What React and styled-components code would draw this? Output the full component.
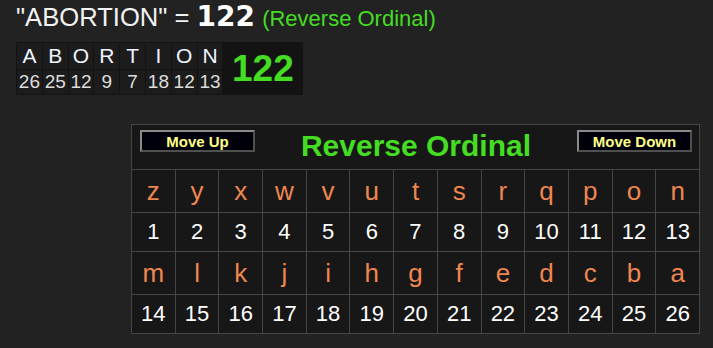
import React from "react";
import styled, { createGlobalStyle } from "styled-components";

const Global = createGlobalStyle`
  html, body { margin: 0; padding: 0; background: #222222; }
  body { font-family: "Liberation Sans", Arial, sans-serif; }
`;

const Page = styled.div`
  padding: 3px 0 0 16px;
`;

const Heading = styled.div`
  color: #f2f2f2;
  font-size: 25.6px;
  line-height: 1;
  white-space: nowrap;
`;

const Total = styled.span`
  font-family: "DejaVu Sans", Verdana, sans-serif;
  font-weight: bold;
  font-size: 28px;
  color: #ffffff;
`;

const CipherName = styled.span`
  font-size: 22px;
  color: #44dd22;
`;

const WordTable = styled.div`
  display: inline-grid;
  grid-template-columns: repeat(8, 24.8px) 79px;
  grid-template-rows: 26px 24px;
  gap: 1px;
  padding: 1px;
  background: #131313;
  margin-top: 11px;
`;

const WordCell = styled.div`
  background: #1c1c1c;
  display: flex;
  align-items: center;
  justify-content: center;
  color: ${(p) => (p.$letter ? "#eef4ff" : "#dddddd")};
  font-size: ${(p) => (p.$letter ? "21px" : "19px")};
`;

const WordTotal = styled.div`
  grid-column: 9;
  grid-row: 1 / span 2;
  background: #131313;
  display: flex;
  align-items: center;
  justify-content: center;
  color: #44dd22;
  font-weight: bold;
  font-size: 37px;
`;

const Chart = styled.div`
  display: grid;
  width: 569px;
  box-sizing: border-box;
  grid-template-columns: repeat(13, 1fr);
  grid-template-rows: 44px 42px 38px 42px 38px;
  gap: 1px;
  padding: 1px;
  background: #454545;
  margin: 29px 0 0 115px;
`;

const Header = styled.div`
  grid-column: 1 / -1;
  background: #171717;
  display: flex;
  justify-content: space-between;
  align-items: flex-start;
  padding: 5px 7px 0 8px;
`;

const MoveButton = styled.button`
  width: 115px;
  height: 22px;
  box-sizing: border-box;
  padding: 2px 0 0;
  margin: 0;
  background: #00000a;
  border: 2px solid;
  border-color: #8a8a8a #505050 #505050 #8a8a8a;
  color: #ffff88;
  font-family: "Liberation Sans", Arial, sans-serif;
  font-weight: bold;
  font-size: 15px;
  line-height: 16px;
  text-align: center;
  cursor: pointer;
`;

const Title = styled.div`
  margin-top: -1px;
  color: #44dd22;
  font-weight: bold;
  font-size: 30px;
  white-space: nowrap;
`;

const ChartCell = styled.div`
  background: #171717;
  display: flex;
  align-items: center;
  justify-content: center;
  color: ${(p) => (p.$letter ? "#ee8650" : "#ffffff")};
  font-size: ${(p) => (p.$letter ? "26px" : "22px")};
`;

const word = [
  ["A", 26], ["B", 25], ["O", 12], ["R", 9],
  ["T", 7], ["I", 18], ["O", 12], ["N", 13],
];

const letters = "zyxwvutsrqponmlkjihgfedcba".split("");

export default function App() {
  const rows = [letters.slice(0, 13), letters.slice(13)];
  return (
    <Page>
      <Global />
      <Heading>
        "ABORTION" = <Total>122</Total> <CipherName>(Reverse Ordinal)</CipherName>
      </Heading>
      <WordTable>
        {word.map(([l], i) => (
          <WordCell key={"l" + i} $letter>{l}</WordCell>
        ))}
        <WordTotal>122</WordTotal>
        {word.map(([, n], i) => (
          <WordCell key={"n" + i}>{n}</WordCell>
        ))}
      </WordTable>
      <Chart>
        <Header>
          <MoveButton>Move Up</MoveButton>
          <Title>Reverse Ordinal</Title>
          <MoveButton>Move Down</MoveButton>
        </Header>
        {rows.map((row, r) => (
          <React.Fragment key={r}>
            {row.map((l) => (
              <ChartCell key={l} $letter>{l}</ChartCell>
            ))}
            {row.map((l, i) => (
              <ChartCell key={l + "n"}>{r * 13 + i + 1}</ChartCell>
            ))}
          </React.Fragment>
        ))}
      </Chart>
    </Page>
  );
}
